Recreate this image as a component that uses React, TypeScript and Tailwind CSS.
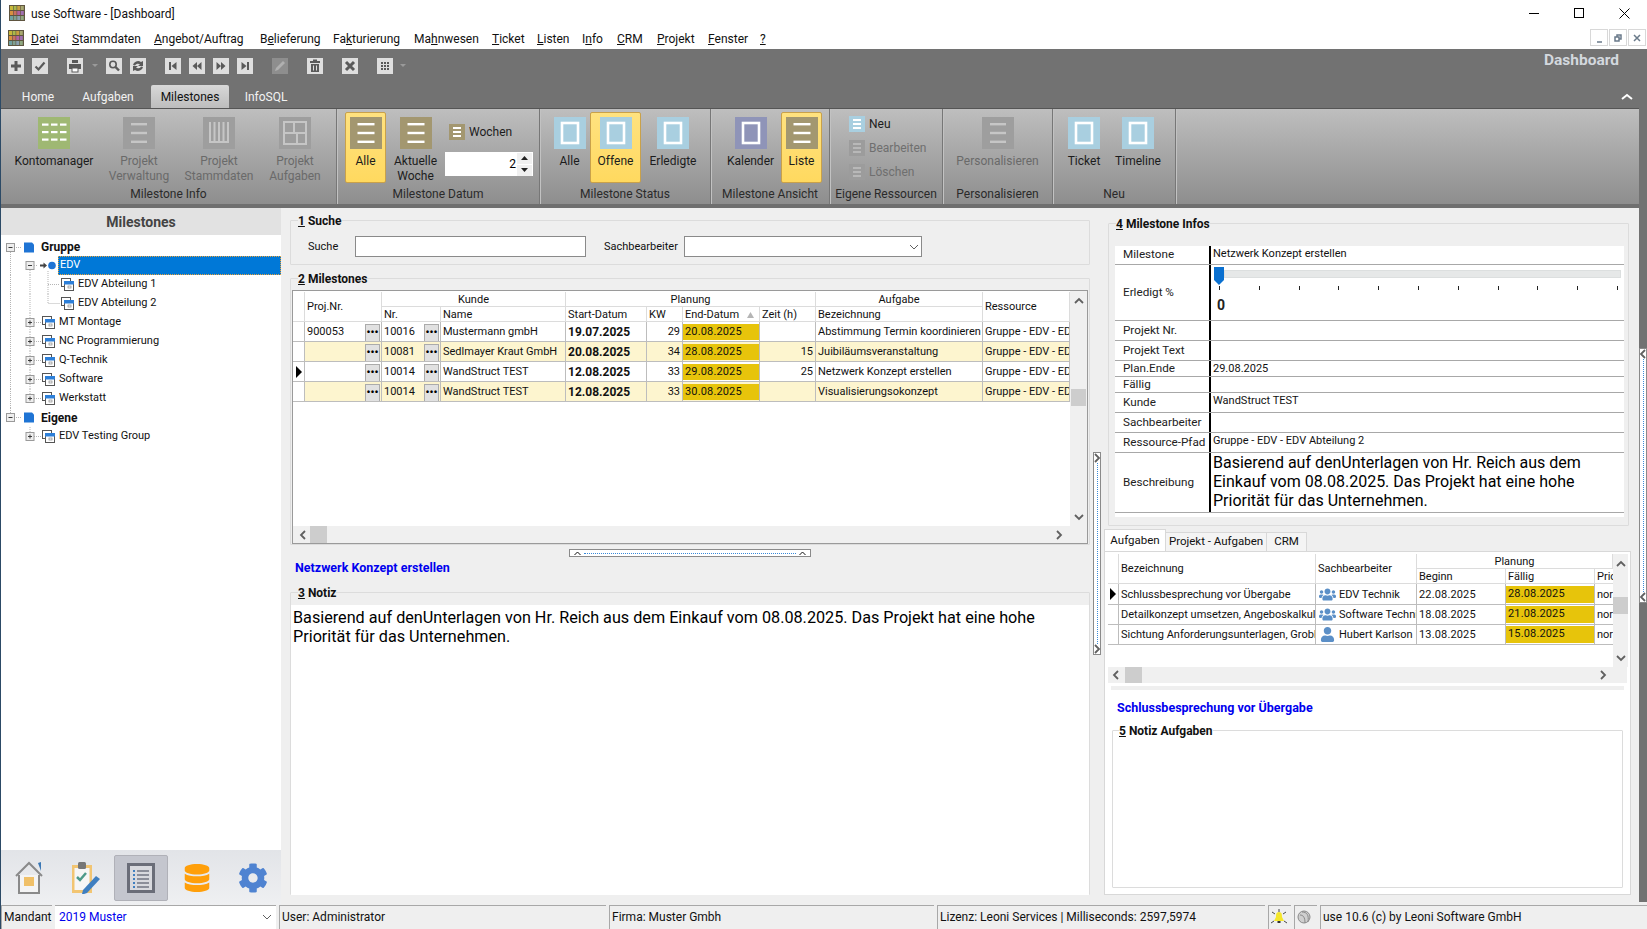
import { ReactNode } from "react";
import { FaCog, FaDatabase, FaUser, FaUsers } from "react-icons/fa";

const logoColors = [
  ["#c8b83a", "#a8b84a", "#c8a040", "#a8a870"],
  ["#d89040", "#c87060", "#b060a0", "#a070b0"],
  ["#70a0a0", "#80a090", "#8aa0b0", "#90a880"],
];

const Logo = () => (
  <svg width="16" height="16" viewBox="0 0 16 16" className="shrink-0">
    <rect width="16" height="16" fill="#5f5540" />
    {logoColors.map((row, y) =>
      row.map((c, x) => <rect key={`${x}-${y}`} x={1 + x * 3.6} y={1 + y * 5} width="3" height="4" fill={c} />),
    )}
  </svg>
);

const ToolIcon = ({ d, dark }: { d: ReactNode; dark?: boolean }) => (
  <svg width="16" height="16" viewBox="0 0 16 16" className={dark ? "shrink-0 bg-[#8e8e8e]" : "shrink-0 bg-[#dedede]"}>
    {d}
  </svg>
);

const g = "#5a5a5a";
const toolbarGlyphs = {
  plus: <path d="M8 3v10M3 8h10" stroke={g} strokeWidth="3" />,
  check: <path d="M3.5 8.5l3 3 6-7" stroke={g} strokeWidth="2.2" fill="none" />,
  print: (
    <g fill={g}>
      <rect x="5" y="2" width="6" height="3" />
      <rect x="2" y="6" width="12" height="5" />
      <rect x="5" y="10" width="6" height="4" fill="#fff" stroke={g} />
    </g>
  ),
  search: (
    <g fill="none" stroke={g}>
      <circle cx="7" cy="6.5" r="3.2" strokeWidth="1.6" />
      <path d="M9.5 9l3.5 3.5" strokeWidth="2.4" />
    </g>
  ),
  refresh: (
    <g fill={g}>
      <path d="M3 7a5 4.5 0 0 1 8-3l2-1v5H8l2-1.6A3.2 3 0 0 0 5 7.6z" />
      <path d="M13 9a5 4.5 0 0 1-8 3l-2 1V8h5L6 9.6a3.2 3 0 0 0 5-1.2z" />
    </g>
  ),
  first: <path d="M4 4h2v8H4zM11.5 4v8L6.5 8z" fill={g} />,
  prev: <path d="M8 4v8L3.5 8zM12.5 4v8L8 8z" fill={g} />,
  next: <path d="M3.5 4v8L8 8zM8 4v8l4.5-4z" fill={g} />,
  last: <path d="M10 4h2v8h-2zM4.5 4v8L9.5 8z" fill={g} />,
  pencil: <path d="M3 13l1-3 7-7 2 2-7 7z" fill="#b0b0b0" />,
  trash: (
    <g fill={g}>
      <rect x="3" y="3" width="10" height="2" />
      <rect x="6" y="1.5" width="4" height="1.5" />
      <path d="M4 6h8v8H4zM6 7.5v5h1v-5zM9 7.5v5h1v-5z" fillRule="evenodd" />
    </g>
  ),
  close: <path d="M4 4l8 8M12 4l-8 8" stroke={g} strokeWidth="3" />,
  grid: (
    <g fill={g}>
      {[4, 7, 10].map((x) => [4, 7, 10].map((y) => <rect key={`${x}-${y}`} x={x} y={y} width="2" height="2" />))}
    </g>
  ),
};

const Caret = () => (
  <svg width="6" height="4" viewBox="0 0 6 4" className="shrink-0">
    <path d="M0 0h6L3 3z" fill="#9a9a9a" />
  </svg>
);

const glyphs: Record<string, ReactNode> = {
  lines: (
    <g fill="#fff">
      <rect x="7.5" y="6" width="17" height="2.4" />
      <rect x="7.5" y="14.8" width="17" height="2.4" />
      <rect x="7.5" y="23.6" width="17" height="2.4" />
    </g>
  ),
  box: <rect x="8" y="6" width="16" height="20" fill="none" stroke="#fff" strokeWidth="2.6" />,
  table: (
    <g fill="#fff">
      {[6.5, 14, 21.5].map((y) =>
        [4, 13, 22].map((x) => <rect key={`${x}-${y}`} x={x} y={y} width="6.5" height="2.2" />),
      )}
    </g>
  ),
  cols: (
    <g fill="none" stroke="#c6c6c6" strokeWidth="2">
      <path d="M7 5v20h18V5M11.5 5v20M16 5v20M20.5 5v20" />
    </g>
  ),
  panels: (
    <g fill="none" stroke="#c6c6c6" strokeWidth="2">
      <rect x="5" y="5" width="22" height="22" />
      <path d="M15 5v11M5 16h22M18 16v11" />
    </g>
  ),
  grayLines: (
    <g fill="#c6c6c6">
      <rect x="8" y="6" width="16" height="2.4" />
      <rect x="8" y="14.8" width="16" height="2.4" />
      <rect x="8" y="23.6" width="16" height="2.4" />
    </g>
  ),
};

const BigIcon = ({ kind, color }: { kind: string; color: string }) => (
  <svg width="32" height="32" viewBox="0 0 32 32" className="shrink-0" style={{ backgroundColor: color }}>
    {glyphs[kind]}
  </svg>
);

const SmallIcon = ({ color, bar = "#fff" }: { color: string; bar?: string }) => (
  <svg width="16" height="16" viewBox="0 0 16 16" className="shrink-0" style={{ backgroundColor: color }}>
    <g fill={bar}>
      <rect x="4" y="3" width="8" height="2" />
      <rect x="4" y="7" width="8" height="2" />
      <rect x="4" y="11" width="8" height="2" />
    </g>
  </svg>
);

const BigButton = ({
  kind,
  color,
  label,
  w,
  on,
  off,
}: {
  kind: string;
  color: string;
  label: ReactNode;
  w: string;
  on?: boolean;
  off?: boolean;
}) => (
  <div
    className={`mt-[3px] flex h-[71px] shrink-0 flex-col items-center rounded-[2px] text-center leading-[15px] ${
      on ? "border border-[#c9a14a] bg-linear-to-b from-[#ffe27f] to-[#ffd95f] pt-[4px]" : "pt-[5px]"
    } ${w} ${off ? "text-[#6a6a6a]" : "text-[#1c1c1c]"}`}
  >
    <BigIcon kind={kind} color={color} />
    <div className="mt-[5px]">{label}</div>
  </div>
);

const RibbonGroup = ({ w, label, children }: { w: string; label: string; children: ReactNode }) => (
  <div className={`relative flex h-full shrink-0 flex-col border-r border-r-[#777] shadow-[1px_0_0_#c2c2c2] ${w}`}>
    <div className="flex flex-1">{children}</div>
    <div className="h-[19px] pt-[2px] text-center leading-[15px] text-[#2a2a2a]">{label}</div>
  </div>
);

const SmallAction = ({ label, off }: { label: string; off?: boolean }) => (
  <div className={`flex h-[16px] items-center gap-[4px] ${off ? "text-[#6f6f6f]" : "text-[#1c1c1c]"}`}>
    <SmallIcon color={off ? "#9c9c9c" : "#a9cfe0"} bar={off ? "#b8b8b8" : "#fff"} />
    {label}
  </div>
);

const Ribbon = () => (
  <div className="flex h-[96px] border-t border-t-[#555] bg-linear-to-b from-[#bebebe] to-[#8e8e8e]">
    <RibbonGroup w="w-[336px]" label="Milestone Info">
      <BigButton kind="table" color="#9fb873" label="Kontomanager" w="ml-[7px] w-[92px]" />
      <div className="w-[14px]" />
      <BigButton kind="grayLines" color="#9e9e9e" label={<>Projekt<br />Verwaltung</>} w="-ml-[7px] w-[64px]" off />
      <BigButton kind="cols" color="#9e9e9e" label={<>Projekt<br />Stammdaten</>} w="w-[96px]" off />
      <BigButton kind="panels" color="#9e9e9e" label={<>Projekt<br />Aufgaben</>} w="w-[56px]" off />
    </RibbonGroup>
    <RibbonGroup w="w-[203px]" label="Milestone Datum">
      <BigButton kind="lines" color="#a39770" label="Alle" w="ml-[8px] w-[41px]" on />
      <BigButton kind="lines" color="#a39770" label={<>Aktuelle<br />Woche</>} w="w-[59px]" />
      <div className="flex w-[88px] flex-col pt-[15px]">
        <div className="ml-[4px] flex h-[16px] items-center gap-[4px] text-[#1c1c1c]">
          <SmallIcon color="#a39770" />
          Wochen
        </div>
        <div className="mt-[12px] flex h-[24px] items-center justify-end bg-white pr-[1px]">
          <span className="mr-[1px] text-black">2</span>
          <div className="flex w-[15px] flex-col gap-[1px]">
            <div className="flex h-[11px] items-center justify-center bg-[#f0f0f0]">
              <svg width="7" height="4" viewBox="0 0 7 4"><path d="M0 4h7L3.5 0z" fill="#222" /></svg>
            </div>
            <div className="flex h-[11px] items-center justify-center bg-[#f0f0f0]">
              <svg width="7" height="4" viewBox="0 0 7 4"><path d="M0 0h7L3.5 4z" fill="#222" /></svg>
            </div>
          </div>
        </div>
      </div>
    </RibbonGroup>
    <RibbonGroup w="w-[171px]" label="Milestone Status">
      <BigButton kind="box" color="#a9cfe0" label="Alle" w="ml-[9px] w-[41px]" />
      <BigButton kind="box" color="#a9cfe0" label="Offene" w="w-[51px]" on />
      <BigButton kind="box" color="#a9cfe0" label="Erledigte" w="w-[64px]" />
    </RibbonGroup>
    <RibbonGroup w="w-[119px]" label="Milestone Ansicht">
      <BigButton kind="box" color="#8f94b8" label="Kalender" w="ml-[9px] w-[61px]" />
      <BigButton kind="lines" color="#a39770" label="Liste" w="w-[41px]" on />
    </RibbonGroup>
    <RibbonGroup w="w-[113px]" label="Eigene Ressourcen">
      <div className="ml-[19px] flex flex-col gap-[8px] pt-[7px]">
        <SmallAction label="Neu" />
        <SmallAction label="Bearbeiten" off />
        <SmallAction label="Löschen" off />
      </div>
    </RibbonGroup>
    <RibbonGroup w="w-[110px]" label="Personalisieren">
      <BigButton kind="grayLines" color="#9e9e9e" label="Personalisieren" w="w-full" off />
    </RibbonGroup>
    <RibbonGroup w="w-[123px]" label="Neu">
      <BigButton kind="box" color="#a9cfe0" label="Ticket" w="ml-[10px] w-[42px]" />
      <BigButton kind="box" color="#a9cfe0" label="Timeline" w="w-[66px]" />
    </RibbonGroup>
  </div>
);

// tree
const Expander = ({ x, open }: { x: number; open: boolean }) => (
  <g>
    <rect x={x - 4} y="5.5" width="8" height="8" fill="#eee" stroke="#9a9a9a" />
    <path d={`M${x - 2} 9.5h4`} stroke="#3a3a3a" />
    {!open && <path d={`M${x} 7.5v4`} stroke="#3a3a3a" />}
  </g>
);

const NodeIcon = ({ x }: { x: number }) => (
  <g>
    <rect x={x + 0.5} y="3.5" width="9" height="8" fill="#fff" stroke="#555" />
    <rect x={x + 3.5} y="6.5" width="9" height="9" fill="#fff" stroke="#555" />
    <rect x={x + 3} y="6" width="10" height="3.5" fill="#2d7fd8" />
    <rect x={x + 7} y="11" width="3" height="2" fill="none" stroke="#888" strokeWidth="0.7" />
  </g>
);

const dotted = { stroke: "#b5b5b5", strokeDasharray: "1 1", fill: "none" };

const Tree = () => {
  const lvl2 = ["MT Montage", "NC Programmierung", "Q-Technik", "Software", "Werkstatt"];
  return (
    <div className="-ml-[1px] min-h-0 flex-1 bg-white pt-[2px] text-[11px] text-[#111]">
      <div className="flex h-[19px] items-center pt-[1px]">
        <div className="w-[41px] shrink-0">
          <svg width="36" height="19" viewBox="0 0 36 19">
            <path d="M10.5 14v5M14 9.5h8" style={dotted} />
            <Expander x={10.5} open />
            <path d="M24 4.5h8l2 2v8h-10z" fill="#1f74d4" />
          </svg>
        </div>
        <b className="text-[12px]">Gruppe</b>
      </div>
      <div className="flex h-[19px] items-center">
        <svg width="58" height="19" viewBox="0 0 58 19" className="shrink-0">
          <path d="M10.5 0v19M30 14v5M48 15v4" style={dotted} />
          <Expander x={30} open />
          <path d="M34 9.5h3" style={dotted} />
          <path d="M40 8.5h3.5V6.5L47 9.5l-3.5 3v-2H40z" fill="#444" />
          <circle cx="52" cy="9.5" r="3.8" fill="#1f74d4" />
        </svg>
        <div className="flex h-[19px] flex-1 items-center border border-dotted border-[#e8a23a] bg-[#0078d7] pl-[1px] text-white">EDV</div>
      </div>
      {["EDV Abteilung 1", "EDV Abteilung 2"].map((t, i) => (
        <div key={t} className="flex h-[19px] items-center">
          <svg width="76" height="19" viewBox="0 0 76 19" className="shrink-0">
            <path d="M10.5 0v19M30 0v19" style={dotted} />
            <path d={i === 0 ? "M48 0v19M48 9.5h12" : "M48 0v9.5h12"} style={dotted} />
            <NodeIcon x={61} />
          </svg>
          <span className="ml-[2px]">{t}</span>
        </div>
      ))}
      {lvl2.map((t, i) => (
        <div key={t} className="flex h-[19px] items-center">
          <svg width="57" height="19" viewBox="0 0 57 19" className="shrink-0">
            <path d={`M10.5 0v19M30 0v${i === lvl2.length - 1 ? 9 : 19}M34 9.5h7`} style={dotted} />
            <Expander x={30} open={false} />
            <NodeIcon x={42} />
          </svg>
          <span className="ml-[2px]">{t}</span>
        </div>
      ))}
      <div className="flex h-[19px] items-center">
        <div className="w-[41px] shrink-0">
          <svg width="36" height="19" viewBox="0 0 36 19">
            <path d="M10.5 0v5M14 9.5h8" style={dotted} />
            <Expander x={10.5} open />
            <path d="M24 4.5h8l2 2v8h-10z" fill="#1f74d4" />
          </svg>
        </div>
        <b className="text-[12px]">Eigene</b>
      </div>
      <div className="flex h-[19px] items-center">
        <svg width="57" height="19" viewBox="0 0 57 19" className="shrink-0">
          <path d="M30 0v5M34 9.5h7" style={dotted} />
          <Expander x={30} open={false} />
          <NodeIcon x={42} />
        </svg>
        <span className="ml-[2px]">EDV Testing Group</span>
      </div>
    </div>
  );
};

const House = () => (
  <svg width="30" height="34" viewBox="0 0 30 34">
    <path d="M24 2l3-1v9z" fill="#3b78b5" />
    <path d="M2 15L15 2l13 13" fill="none" stroke="#8a8a8a" strokeWidth="2" />
    <path d="M5 14v18h20V14" fill="#f4f4f4" stroke="#8a8a8a" strokeWidth="2" />
    <rect x="10" y="16" width="10" height="9" fill="#f0c068" />
  </svg>
);

const Clipboard = () => (
  <svg width="30" height="34" viewBox="0 0 30 34">
    <rect x="1" y="4" width="20" height="28" fill="#f2c572" />
    <rect x="3.5" y="7" width="15" height="22" fill="#f6f6f6" />
    <rect x="7" y="1" width="8" height="7" rx="1.5" fill="#777" />
    <path d="M6 16l3 3 6-7" fill="none" stroke="#4d9a8a" strokeWidth="2.5" />
    <path d="M13 33l-2 0 1-4 13-14 4 3-13 14z" fill="#3f7fc0" />
  </svg>
);

const ListDoc = () => (
  <svg width="28" height="30" viewBox="0 0 28 30">
    <rect x="1.5" y="1.5" width="25" height="27" fill="#d8d9de" stroke="#6a6d78" strokeWidth="3" />
    {[7, 11, 15, 19, 23].map((y) => (
      <g key={y}>
        <rect x="6" y={y} width="2" height="2" fill="#3f7fc0" />
        <rect x="10" y={y} width="12" height="2" fill="#8b8e99" />
      </g>
    ))}
  </svg>
);

const NavBar = () => (
  <div className="-ml-[1px] flex h-[55px] shrink-0 items-center bg-linear-to-b from-[#e2e4e8] to-[#eff0f2]">
    <div className="flex w-[57px] justify-center"><House /></div>
    <div className="flex w-[57px] justify-center"><Clipboard /></div>
    <div className="flex h-[46px] w-[54px] items-center justify-center rounded-[2px] border border-[#b0b1b8] bg-[#c4c6ce]"><ListDoc /></div>
    <div className="flex w-[58px] justify-center"><FaDatabase size={28} color="#ff9f0a" /></div>
    <div className="flex w-[54px] justify-center"><FaCog size={30} color="#4f83d1" /></div>
  </div>
);

const Chev = ({ dir, thin }: { dir: "u" | "d" | "l" | "r"; thin?: boolean }) => {
  const p = { u: "M1 7l4-4 4 4", d: "M1 3l4 4 4-4", l: "M7 1L3 5l4 4", r: "M3 1l4 4-4 4" }[dir];
  return (
    <svg width="10" height="10" viewBox="0 0 10 10" className="shrink-0">
      <path d={p} fill="none" stroke="#606060" strokeWidth={thin ? 1 : 1.8} />
    </svg>
  );
};

const Group = ({
  n,
  title,
  cls,
  legend = "ml-[7px]",
  children,
}: {
  n: string;
  title: string;
  cls: string;
  legend?: string;
  children: ReactNode;
}) => (
  <fieldset className={`min-w-0 rounded-[1px] border border-[#dcdcdc] ${cls}`}>
    <legend className={`h-[15px] px-0 leading-[17px] font-bold text-[#111] ${legend}`}>
      <u>{n}</u> {title}
    </legend>
    {children}
  </fieldset>
);

const Dots = () => (
  <div className="m-auto flex h-[18px] w-[15px] items-center justify-center border border-[#ababab] bg-[#e1e1e1] text-[11px] leading-none font-bold text-black">
    •••
  </div>
);

const hd = "flex items-center overflow-hidden whitespace-nowrap border-r border-b border-[#dcdcdc] px-[2px] pt-[1px] text-[11px] text-[#111]";
const td = "flex items-center overflow-hidden whitespace-nowrap border-r border-b border-[#bdbdbd] px-[2px] pt-[2px] text-[11px]";

const milestones = [
  { p: "900053", nr: "10016", name: "Mustermann gmbH", start: "19.07.2025", kw: "29", end: "20.08.2025", h: "", bez: "Abstimmung Termin koordinieren", alt: false, cur: false },
  { p: "", nr: "10081", name: "Sedlmayer Kraut GmbH", start: "20.08.2025", kw: "34", end: "28.08.2025", h: "15", bez: "Juibiläumsveranstaltung", alt: true, cur: false },
  { p: "", nr: "10014", name: "WandStruct TEST", start: "12.08.2025", kw: "33", end: "29.08.2025", h: "25", bez: "Netzwerk Konzept erstellen", alt: false, cur: true },
  { p: "", nr: "10014", name: "WandStruct TEST", start: "12.08.2025", kw: "33", end: "30.08.2025", h: "", bez: "Visualisierungsokonzept", alt: true, cur: false },
];

const Pointer = () => (
  <svg width="6" height="12" viewBox="0 0 6 12" className="m-auto">
    <path d="M0 0l6 6-6 6z" fill="#000" />
  </svg>
);

const MilestoneGrid = () => (
  <div className="flex h-[254px] flex-col border border-[#9a9a9a] bg-white">
    <div className="flex min-h-0 flex-1">
      <div className="w-[777px] shrink-0 pt-[1px]">
        <div className="grid grid-cols-[12px_77px_59px_125px_81px_36px_77px_56px_167px_87px] grid-rows-[15px_15px] leading-[14px]">
          <div className="row-span-2 border-r border-b border-[#dcdcdc]" />
          <div className={`${hd} row-span-2`}>Proj.Nr.</div>
          <div className={`${hd} col-span-2 justify-center`}>Kunde</div>
          <div className={`${hd} col-span-4 justify-center`}>Planung</div>
          <div className={`${hd} justify-center`}>Aufgabe</div>
          <div className={`${hd} row-span-2`}>Ressource</div>
          <div className={hd}>Nr.</div>
          <div className={hd}>Name</div>
          <div className={hd}>Start-Datum</div>
          <div className={hd}>KW</div>
          <div className={`${hd} justify-between`}>
            End-Datum
            <svg width="7" height="6" viewBox="0 0 7 6" className="mr-[3px] shrink-0"><path d="M0 6h7L3.5 0z" fill="#b5b5b5" /></svg>
          </div>
          <div className={hd}>Zeit (h)</div>
          <div className={hd}>Bezeichnung</div>
        </div>
        {milestones.map((r, i) => (
          <div
            key={i}
            className={`grid h-[20px] grid-cols-[12px_77px_59px_125px_81px_36px_77px_56px_167px_87px] ${r.alt ? "bg-[#fdf5cf]" : "bg-white"}`}
          >
            <div className="flex items-center border-r border-b border-[#bdbdbd] bg-white">{r.cur && <Pointer />}</div>
            <div className={`${td} justify-between pr-[1px]`}>
              {r.p}
              <div className="ml-auto"><Dots /></div>
            </div>
            <div className={`${td} justify-between pr-[1px]`}>
              {r.nr}
              <div className="ml-auto"><Dots /></div>
            </div>
            <div className={td}>{r.name}</div>
            <div className={`${td} !pt-[1px] !text-[12px] font-bold`}>{r.start}</div>
            <div className={`${td} justify-end`}>{r.kw}</div>
            <div className="flex items-center overflow-hidden border-r border-b border-[#bdbdbd] pt-[2px] pb-[1px] text-[11px] tracking-[0.15px] whitespace-nowrap">
              <span className="flex h-full w-full items-center bg-[#e7c40b] pl-[2px]">{r.end}</span>
            </div>
            <div className={`${td} justify-end`}>{r.h}</div>
            <div className={td}>{r.bez}</div>
            <div className={td}>Gruppe - EDV - EDV</div>
          </div>
        ))}
      </div>
      <div className="flex w-[17px] shrink-0 flex-col items-center bg-[#f0f0f0] pt-[5px] pb-[4px]">
        <Chev dir="u" />
        <div className="mt-[83px] h-[17px] w-[15px] bg-[#cdcdcd]" />
        <div className="mt-auto"><Chev dir="d" /></div>
      </div>
    </div>
    <div className="flex h-[17px] shrink-0 items-center bg-[#f0f0f0] pr-[23px] pl-[5px]">
      <Chev dir="l" />
      <div className="ml-[2px] h-full w-[17px] bg-[#cdcdcd]" />
      <div className="ml-auto"><Chev dir="r" /></div>
    </div>
  </div>
);

const infoRows = [
  { l: "Milestone", v: "Netzwerk Konzept erstellen", h: "h-[19px]" },
  { l: "Erledigt %", slider: true, h: "h-[56px]" },
  { l: "Projekt Nr.", v: "", h: "h-[20px]" },
  { l: "Projekt Text", v: "", h: "h-[20px]" },
  { l: "Plan.Ende", v: "29.08.2025", h: "h-[16px]" },
  { l: "Fällig", v: "", h: "h-[16px]" },
  { l: "Kunde", v: "WandStruct TEST", h: "h-[20px]" },
  { l: "Sachbearbeiter", v: "", h: "h-[20px]" },
  { l: "Ressource-Pfad", v: "Gruppe - EDV - EDV Abteilung 2", h: "h-[20px]" },
];

const Slider = () => (
  <div className="px-[3px] pt-[2px]">
    <div className="flex h-[18px] items-start">
      <svg width="10" height="18" viewBox="0 0 10 18" className="shrink-0">
        <path d="M0 0h10v13l-5 5-5-5z" fill="#0a70d0" />
      </svg>
      <div className="mt-[3px] h-[8px] flex-1 border border-[#dcdfdf] bg-[#e6e8e8]" />
    </div>
    <div className="mt-[1px] flex justify-between pr-[3px] pl-[5px]">
      {Array.from({ length: 11 }).map((_, i) => (
        <div key={i} className="h-[4px] w-[1px] bg-[#222]" />
      ))}
    </div>
    <div className="mt-[7px] ml-[3px] text-[14px] leading-[16px] font-bold text-[#222]">0</div>
  </div>
);

const InfoTable = () => (
  <div className="flex h-[271px] w-[509px] flex-col bg-white">
    {infoRows.map((r) => (
      <div key={r.l} className={`flex shrink-0 border-b border-[#a8a8a8] ${r.h}`}>
        <div className="flex w-[96px] shrink-0 items-center border-r-2 border-black pl-[8px] text-[11.7px] whitespace-nowrap text-[#222]">{r.l}</div>
        <div className="min-w-0 flex-1">
          {r.slider ? <Slider /> : <div className="pl-[2px] text-[11px] leading-[15px]">{r.v}</div>}
        </div>
      </div>
    ))}
    <div className="flex h-[60px] shrink-0 border-b border-[#a8a8a8]">
      <div className="flex w-[96px] shrink-0 items-center border-r-2 border-black pl-[8px] text-[11.7px] text-[#222]">Beschreibung</div>
      <div className="pl-[2px] text-[16px] leading-[19px] text-black">
        Basierend auf denUnterlagen von Hr. Reich aus dem
        <br />
        Einkauf vom 08.08.2025. Das Projekt hat eine hohe
        <br />
        Priorität für das Unternehmen.
      </div>
    </div>
  </div>
);

const aufgaben = [
  { t: "Schlussbesprechung vor Übergabe", s: "EDV Technik", b: "22.08.2025", f: "28.08.2025", group: true, cur: true },
  { t: "Detailkonzept umsetzen, Angeboskalkulation", s: "Software Technik", b: "18.08.2025", f: "21.08.2025", group: true, cur: false },
  { t: "Sichtung Anforderungsunterlagen, Grobkonzept", s: "Hubert Karlson", b: "13.08.2025", f: "15.08.2025", group: false, cur: false },
];

const AufgabenGrid = () => (
  <div className="flex h-[129px] flex-col">
    <div className="flex min-h-0 flex-1">
      <div className="w-[505px] shrink-0 bg-white">
        <div className="grid grid-cols-[11px_197px_101px_89px_89px_18px] grid-rows-[15px_15px] leading-[14px]">
          <div className="row-span-2 border-r border-b border-[#dcdcdc]" />
          <div className={`${hd} row-span-2`}>Bezeichnung</div>
          <div className={`${hd} row-span-2`}>Sachbearbeiter</div>
          <div className={`${hd} col-span-3 justify-center`}>Planung</div>
          <div className={hd}>Beginn</div>
          <div className={hd}>Fällig</div>
          <div className={`${hd} border-r-0`}>Prio</div>
        </div>
        {aufgaben.map((r) => (
          <div key={r.t} className="grid h-[20px] grid-cols-[11px_197px_101px_89px_89px_18px]">
            <div className="flex items-center border-r border-b border-[#bdbdbd]">{r.cur && <Pointer />}</div>
            <div className={td}>{r.t}</div>
            <div className={`${td} gap-[3px] pl-[3px]`}>
              {r.group ? <FaUsers size={17} color="#5b8fc7" className="shrink-0" /> : <FaUser size={15} color="#5b8fc7" className="mx-[1px] shrink-0" />}
              {r.s}
            </div>
            <div className={`${td} tracking-[0.15px]`}>{r.b}</div>
            <div className="flex items-center border-r border-b border-[#bdbdbd] pt-[2px] pb-[1px] text-[11px] tracking-[0.15px]">
              <span className="flex h-full w-full items-center bg-[#e7c40b] pl-[2px]">{r.f}</span>
            </div>
            <div className={`${td} border-r-0`}>nor</div>
          </div>
        ))}
      </div>
      <div className="flex w-[15px] shrink-0 flex-col items-center bg-[#f0f0f0] pt-[5px] pb-[4px]">
        <Chev dir="u" />
        <div className="mt-[28px] h-[17px] w-[15px] bg-[#cdcdcd]" />
        <div className="mt-auto"><Chev dir="d" /></div>
      </div>
    </div>
    <div className="flex h-[16px] shrink-0 items-center bg-[#f0f0f0] pr-[19px] pl-[3px]">
      <Chev dir="l" />
      <div className="ml-[4px] h-full w-[17px] bg-[#cdcdcd]" />
      <div className="ml-auto"><Chev dir="r" /></div>
    </div>
  </div>
);

const Status = ({ w, children }: { w: string; children: ReactNode }) => (
  <div className={`flex h-full shrink-0 items-center overflow-hidden border-t border-l border-[#a8a8a8] pb-[1px] pl-[2px] ${w}`}>{children}</div>
);

const Bell = () => (
  <svg width="16" height="16" viewBox="0 0 16 16">
    <path d="M8 0v3M1 3l3 2M15 3l-3 2M0 14l3-2M16 14l-3-2" stroke="#333" strokeWidth="0.9" />
    <path d="M8 3c3 0 3 3 3 5l2 4H3l2-4c0-2 0-5 3-5z" fill="#f4e62c" />
    <rect x="6.5" y="12" width="3" height="2" fill="#333" />
  </svg>
);

const Ear = () => (
  <svg width="16" height="16" viewBox="0 0 16 16">
    <circle cx="7" cy="8" r="6" fill="#cfcfcf" stroke="#8a8a8a" />
    <path d="M5 3c5 0 7 3 6 10M3 6c3 0 5 2 5 8" fill="none" stroke="#8a8a8a" />
  </svg>
);

const menu: [string, string, string, string][] = [
  ["", "D", "atei", "w-[41px]"],
  ["", "S", "tammdaten", "w-[82px]"],
  ["", "A", "ngebot/Auftrag", "w-[106px]"],
  ["B", "e", "lieferung", "w-[73px]"],
  ["Fa", "k", "turierung", "w-[81px]"],
  ["Ma", "h", "nwesen", "w-[78px]"],
  ["", "T", "icket", "w-[45px]"],
  ["", "L", "isten", "w-[45px]"],
  ["I", "n", "fo", "w-[35px]"],
  ["", "C", "RM", "w-[40px]"],
  ["", "P", "rojekt", "w-[51px]"],
  ["", "F", "enster", "w-[52px]"],
  ["", "?", "", "w-[12px]"],
];

const App = () => (
  <div className="flex h-[929px] w-[1647px] flex-col overflow-hidden border-l border-l-[#2c4a66] bg-[#efefef] font-['Roboto',sans-serif] text-[12px] text-[#111]">
    <div className="flex h-[26px] shrink-0 items-center bg-white pl-[8px]">
      <Logo />
      <span className="mt-[2px] ml-[6px] text-[12px] text-[#111]">use Software - [Dashboard]</span>
      <div className="ml-auto flex items-center pr-[17px]">
        <div className="h-[1px] w-[10px] bg-black" />
        <div className="ml-[35px] h-[10px] w-[10px] border border-black" />
        <svg width="11" height="11" viewBox="0 0 11 11" className="ml-[35px]"><path d="M0.5 0.5l10 10M10.5 0.5l-10 10" stroke="#000" /></svg>
      </div>
    </div>
    <div className="flex h-[23px] shrink-0 items-center bg-white pl-[7px]">
      <Logo />
      <div className="mt-[2px] ml-[7px] flex">
        {menu.map(([a, u, b, w]) => (
          <span key={u + b} className={`shrink-0 ${w}`}>
            {a}
            <u>{u}</u>
            {b}
          </span>
        ))}
      </div>
      <div className="ml-auto flex gap-[1px] pr-[1px]">
        {["M6 12h5", "M5 7h4v4H5zM7 7V5h4v4H9", "M5 5l6 6M11 5l-6 6"].map((d) => (
          <div key={d} className="flex h-[17px] w-[18px] items-center justify-center border border-[#d8d8d8]">
            <svg width="16" height="16" viewBox="0 0 16 16"><path d={d} fill="none" stroke="#6a7a8a" strokeWidth="1.5" /></svg>
          </div>
        ))}
      </div>
    </div>
    <div className="flex min-h-0 flex-1">
      <div className="flex w-[1638px] shrink-0 flex-col">
        <div className="flex h-[59px] shrink-0 flex-col bg-[#727272]">
          <div className="flex h-[34px] shrink-0 items-center pl-[7px]">
            <ToolIcon d={toolbarGlyphs.plus} />
            <div className="ml-[8px]"><ToolIcon d={toolbarGlyphs.check} /></div>
            <div className="ml-[19px]"><ToolIcon d={toolbarGlyphs.print} /></div>
            <div className="ml-[9px]"><Caret /></div>
            <div className="ml-[8px]"><ToolIcon d={toolbarGlyphs.search} /></div>
            <div className="ml-[8px]"><ToolIcon d={toolbarGlyphs.refresh} /></div>
            <div className="ml-[19px]"><ToolIcon d={toolbarGlyphs.first} /></div>
            <div className="ml-[8px]"><ToolIcon d={toolbarGlyphs.prev} /></div>
            <div className="ml-[8px]"><ToolIcon d={toolbarGlyphs.next} /></div>
            <div className="ml-[8px]"><ToolIcon d={toolbarGlyphs.last} /></div>
            <div className="ml-[19px]"><ToolIcon d={toolbarGlyphs.pencil} dark /></div>
            <div className="ml-[19px]"><ToolIcon d={toolbarGlyphs.trash} /></div>
            <div className="ml-[19px]"><ToolIcon d={toolbarGlyphs.close} /></div>
            <div className="ml-[19px]"><ToolIcon d={toolbarGlyphs.grid} /></div>
            <div className="ml-[7px]"><Caret /></div>
            <span className="mr-[20px] ml-auto self-start pt-[2px] text-[15.5px] leading-[18px] font-bold text-[#d3d8de]">Dashboard</span>
          </div>
          <div className="flex h-[25px] shrink-0 items-end text-[#f2f2f2]">
            <div className="flex h-[22px] w-[74px] items-center justify-center">Home</div>
            <div className="mr-[10px] flex h-[22px] w-[66px] items-center justify-center">Aufgaben</div>
            <div className="flex h-[23px] w-[78px] items-center justify-center rounded-t-[2px] bg-linear-to-b from-[#d8d8d8] to-[#bdbdbd] text-[#111]">Milestones</div>
            <div className="flex h-[22px] w-[74px] items-center justify-center">InfoSQL</div>
            <div className="mr-[6px] mb-[7px] ml-auto">
              <svg width="12" height="8" viewBox="0 0 12 8"><path d="M1 6l5-4 5 4" fill="none" stroke="#fff" strokeWidth="2" /></svg>
            </div>
          </div>
        </div>
        <Ribbon />
        <div className="h-[4px] shrink-0 bg-[#6f6f6f]" />
        <div className="flex min-h-0 flex-1">
          <div className="flex w-[280px] shrink-0 flex-col">
            <div className="flex h-[27px] shrink-0 items-center justify-center bg-[#e2e2e2] pt-[1px] text-[14px] font-bold text-[#444]">Milestones</div>
            <Tree />
            <NavBar />
          </div>
          <div className="flex w-[812px] shrink-0 flex-col pr-[3px] pl-[9px]">
            <Group n="1" title="Suche" cls="mt-[5px] h-[52px] shrink-0">
              <div className="flex items-center pt-[8px] pl-[17px] text-[11px]">
                <span className="w-[47px] pt-[1px]">Suche</span>
                <div className="h-[21px] w-[231px] border border-[#8a8a8a] bg-white" />
                <span className="ml-[18px] w-[80px] pt-[1px]">Sachbearbeiter</span>
                <div className="flex h-[21px] w-[238px] items-center justify-end border border-[#8a8a8a] bg-white pr-[2px]">
                  <Chev dir="d" thin />
                </div>
              </div>
            </Group>
            <Group n="2" title="Milestones" cls="mt-[6px] h-[274px] shrink-0 px-[1px]" legend="ml-[6px]">
              <div className="pt-[4px]"><MilestoneGrid /></div>
            </Group>
            <div className="mx-auto mt-[4px] flex h-[8px] w-[242px] shrink-0 items-center justify-between border border-[#8a8a8a] bg-white px-[4px]">
              <svg width="7" height="5" viewBox="0 0 7 5"><path d="M0.5 4l3-3 3 3" fill="none" stroke="#111" /></svg>
              <div className="mx-[3px] flex-1 border-t border-dotted border-[#3a8ad8]" />
              <svg width="7" height="5" viewBox="0 0 7 5"><path d="M0.5 4l3-3 3 3" fill="none" stroke="#111" /></svg>
            </div>
            <div className="flex h-[22px] shrink-0 items-center pl-[5px] text-[12.5px] font-bold text-[#0000ee]">Netzwerk Konzept erstellen</div>
            <Group n="3" title="Notiz" cls="mt-[6px] mb-[10px] min-h-0 flex-1">
              <div className="mt-[5px] h-[290px] bg-white pt-[3px] pl-[2px] text-[16.2px] leading-[19px] text-black">
                Basierend auf denUnterlagen von Hr. Reich aus dem Einkauf vom 08.08.2025. Das Projekt hat eine hohe
                <br />
                Priorität für das Unternehmen.
              </div>
            </Group>
          </div>
          <div className="mt-[244px] flex h-[203px] w-[8px] shrink-0 flex-col items-center justify-between border border-[#8a8a8a] bg-white">
            <Chev dir="r" />
            <div className="flex-1 border-l border-dotted border-[#3a8ad8]" />
            <Chev dir="r" />
          </div>
          <div className="flex w-[538px] shrink-0 flex-col pl-[3px]">
            <Group n="4" title="Milestone Infos" cls="mt-[8px] ml-[4px] h-[310px] w-[521px] shrink-0 pl-[6px]" legend="ml-[1px]">
              <div className="pt-[15px]"><InfoTable /></div>
            </Group>
            <div className="mt-[4px] flex h-[21px] shrink-0 items-end text-[11.5px]">
              <div className="relative z-10 flex h-[22px] w-[62px] items-center justify-center border border-b-0 border-[#d8d8d8] bg-white">Aufgaben</div>
              <div className="flex h-[19px] w-[101px] items-center justify-center border-t border-r border-[#d8d8d8] bg-[#f4f4f4]">Projekt - Aufgaben</div>
              <div className="flex h-[19px] w-[40px] items-center justify-center border-t border-r border-[#d8d8d8] bg-[#f4f4f4]">CRM</div>
            </div>
            <div className="mb-[10px] flex min-h-0 w-[527px] flex-1 flex-col border border-[#d8d8d8] bg-white px-[3px] pt-[2px]">
              <AufgabenGrid />
              <div className="mx-[3px] mt-[3px] h-[4px] shrink-0 bg-[#efefef]" />
              <div className="flex h-[33px] shrink-0 items-center pt-[3px] pl-[9px] text-[12.5px] font-bold text-[#0000ee]">Schlussbesprechung vor Übergabe</div>
              <Group n="5" title="Notiz Aufgaben" cls="mx-[4px] mb-[6px] min-h-0 flex-1 border-[#d4d4d4]" legend="ml-[6px]">
                <div />
              </Group>
            </div>
          </div>
        </div>
      </div>
      <div className="flex w-[8px] shrink-0 flex-col">
        <div className="h-[299px] shrink-0 bg-[#727272]" />
        <div className="flex h-[255px] shrink-0 flex-col items-center justify-between border border-[#8a8a8a] bg-white">
          <Chev dir="l" />
          <div className="flex-1 border-l border-dotted border-[#3a8ad8]" />
          <Chev dir="l" />
        </div>
        <div className="h-[299px] shrink-0 bg-[#727272]" />
      </div>
    </div>
    <div className="flex h-[24px] shrink-0 gap-[3px] bg-[#efefef]">
      <Status w="w-[51px]">Mandant</Status>
      <div className="flex h-full w-[221px] shrink-0 items-center justify-between border-t border-[#a8a8a8] bg-white pr-[4px] pb-[1px] pl-[4px] text-[#0000ee]">
        2019 Muster
        <Chev dir="d" thin />
      </div>
      <Status w="w-[327px]">User: Administrator</Status>
      <Status w="w-[325px]">Firma: Muster Gmbh</Status>
      <Status w="w-[328px]">Lizenz: Leoni Services | Milliseconds: 2597,5974</Status>
      <Status w="w-[23px]"><Bell /></Status>
      <Status w="w-[23px]"><Ear /></Status>
      <Status w="flex-1 !shrink">use 10.6 (c) by Leoni Software GmbH</Status>
    </div>
  </div>
);

export default App;
